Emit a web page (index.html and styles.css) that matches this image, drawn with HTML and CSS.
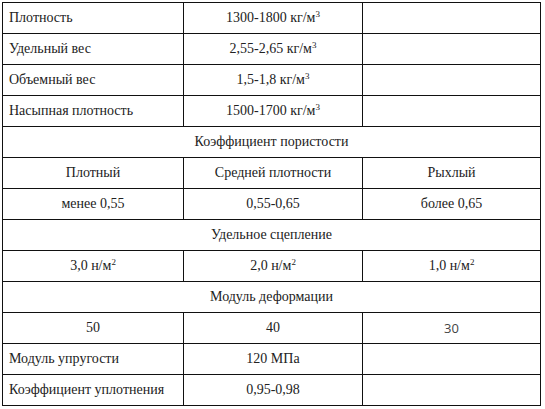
FILE: index.html
```html
<!DOCTYPE html>
<html lang="ru">
<head>
<meta charset="utf-8">
<link rel="stylesheet" href="styles.css">
</head>
<body>
<table class="props">
  <colgroup>
    <col class="c1">
    <col class="c2">
    <col class="c3">
  </colgroup>
  <tbody>
    <tr><td class="left">Плотность</td><td class="center">1300-1800 кг/м<sup>3</sup></td><td></td></tr>
    <tr><td class="left">Удельный вес</td><td class="center">2,55-2,65 кг/м<sup>3</sup></td><td></td></tr>
    <tr><td class="left">Объемный вес</td><td class="center">1,5-1,8 кг/м<sup>3</sup></td><td></td></tr>
    <tr><td class="left">Насыпная плотность</td><td class="center">1500-1700 кг/м<sup>3</sup></td><td></td></tr>
    <tr><td class="center" colspan="3">Коэффициент пористости</td></tr>
    <tr><td class="center">Плотный</td><td class="center">Средней плотности</td><td class="center">Рыхлый</td></tr>
    <tr><td class="center">менее 0,55</td><td class="center">0,55-0,65</td><td class="center">более 0,65</td></tr>
    <tr><td class="center" colspan="3">Удельное сцепление</td></tr>
    <tr><td class="center">3,0 н/м<sup>2</sup></td><td class="center">2,0 н/м<sup>2</sup></td><td class="center">1,0 н/м<sup>2</sup></td></tr>
    <tr><td class="center" colspan="3">Модуль деформации</td></tr>
    <tr><td class="center">50</td><td class="center">40</td><td class="center sans">30</td></tr>
    <tr><td class="left">Модуль упругости</td><td class="center">120 МПа</td><td></td></tr>
    <tr><td class="left">Коэффициент уплотнения</td><td class="center">0,95-0,98</td><td></td></tr>
  </tbody>
</table>
</body>
</html>
```
FILE: styles.css
```css
html, body {
  margin: 0;
  padding: 0;
  background: #ffffff;
}

body {
  padding: 2px 0 0 2px;
  font-family: "Liberation Serif", "Times New Roman", serif;
  font-size: 14px;
  color: #222222;
}

.props {
  border-collapse: collapse;
  table-layout: fixed;
  width: 538px;
}

.c1 { width: 181px; }
.c2 { width: 179px; }
.c3 { width: 178px; }

.props td {
  border: 1px solid #111111;
  height: 30px;
  padding: 0 6px;
  vertical-align: middle;
  white-space: nowrap;
  line-height: 16px;
}

.props td.left { text-align: left; }
.props td.center { text-align: center; }

.props td.sans {
  font-family: "Open Sans", "Liberation Sans", sans-serif;
  font-size: 13px;
  color: #444444;
}

.props sup {
  font-size: 9px;
  line-height: 0;
  vertical-align: 5px;
}
```
